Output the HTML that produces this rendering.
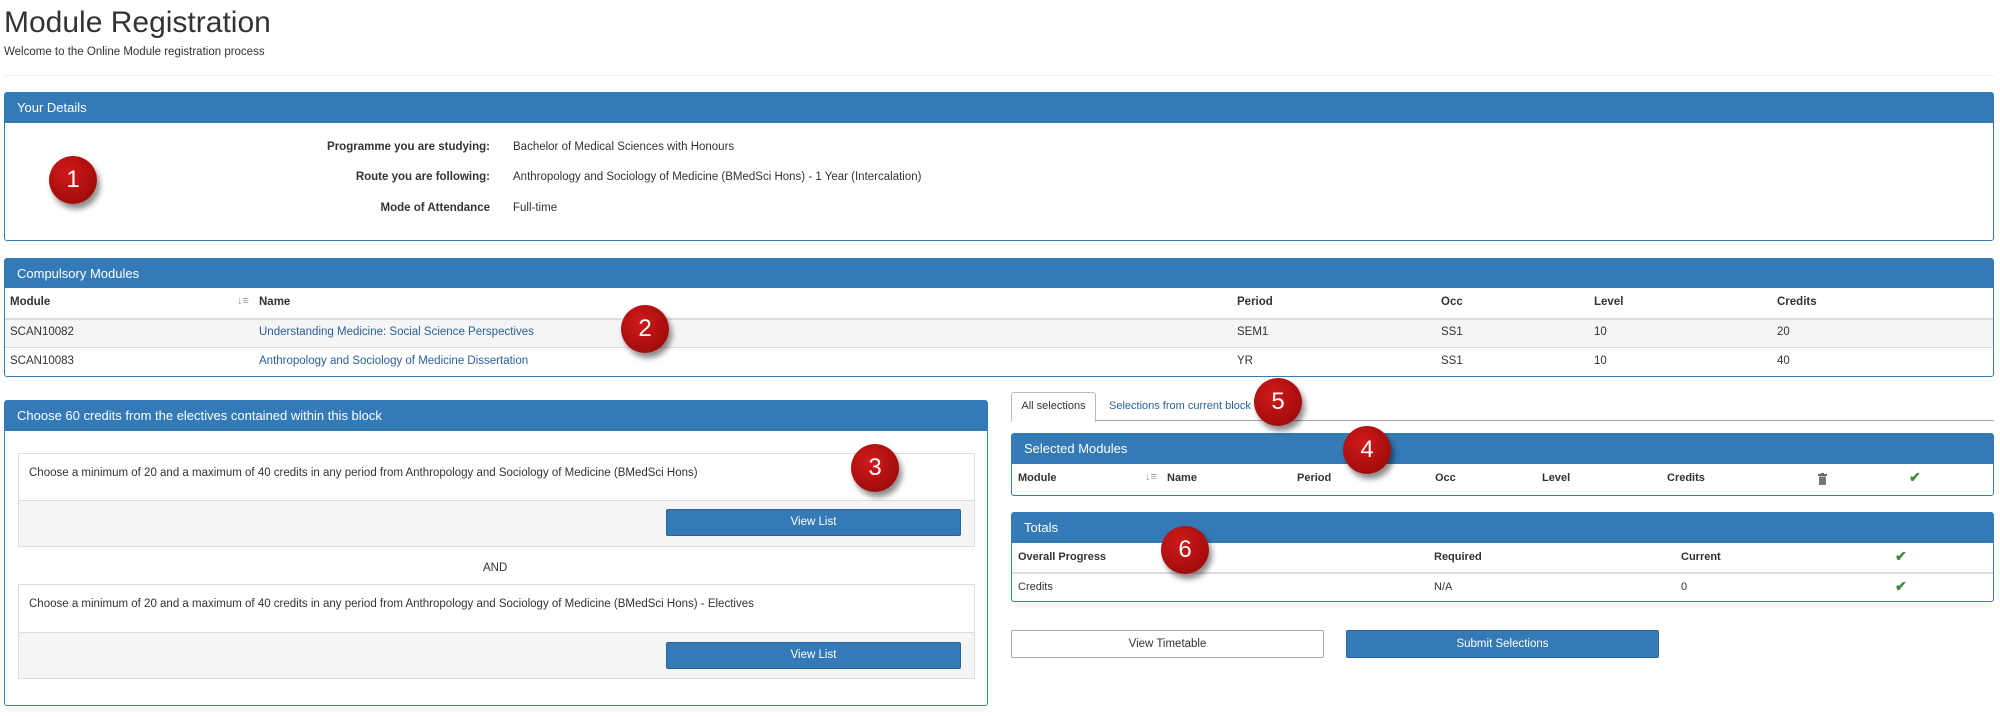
<!DOCTYPE html>
<html><head><meta charset="utf-8">
<style>
*{box-sizing:border-box;margin:0;padding:0}
body{width:2000px;height:717px;background:#fff;font-family:"Liberation Sans",Arial,sans-serif;color:#333;position:relative;overflow:hidden;font-size:11.5px}
.a{position:absolute;white-space:nowrap}
.panel{position:absolute;border:1px solid #337ab7;border-radius:3px;background:#fff;overflow:hidden}
.hd{position:absolute;left:0;right:0;top:0;background:#337ab7;color:#fff;font-size:13px;padding-left:12px}
.b{font-weight:bold}
.row{position:absolute;left:0;right:0;border-top:1px solid #ddd}
.btn{position:absolute;background:#337ab7;border:1px solid #2a6496;color:#fff;text-align:center;border-radius:2px;font-size:11.5px}
.circ{position:absolute;width:48px;height:48px;border-radius:50%;background:radial-gradient(circle at 40% 35%,#d11a1a,#a30c0c 70%);color:#fff;font-size:24px;text-align:center;line-height:48px;box-shadow:3px 5px 6px rgba(0,0,0,.45)}
.lnk{color:#2a5f9e}
.chk{color:#3c8a3c;font-size:14px;font-weight:bold}
</style></head><body>
<div class="a" style="left:4px;top:6px;font-size:30px;color:#333">Module Registration</div>
<div class="a" style="left:4px;top:46px;font-size:11.5px">Welcome to the Online Module registration process</div>
<div class="a" style="left:4px;top:75px;width:1990px;height:1px;background:#eee"></div>

<!-- Your details -->
<div class="panel" style="left:4px;top:92px;width:1990px;height:149px">
 <div class="hd" style="height:30px;line-height:30px">Your Details</div>
</div>
<div class="a b" style="right:1510px;top:141px">Programme you are studying:</div>
<div class="a" style="left:513px;top:141px">Bachelor of Medical Sciences with Honours</div>
<div class="a b" style="right:1510px;top:171px">Route you are following:</div>
<div class="a" style="left:513px;top:171px">Anthropology and Sociology of Medicine (BMedSci Hons) - 1 Year (Intercalation)</div>
<div class="a b" style="right:1510px;top:202px">Mode of Attendance</div>
<div class="a" style="left:513px;top:202px">Full-time</div>

<!-- Compulsory -->
<div class="panel" style="left:4px;top:258px;width:1990px;height:119px">
 <div class="hd" style="height:29px;line-height:29px">Compulsory Modules</div>
 <div class="row" style="top:59px;height:30px;background:#f5f5f5;border-top:2px solid #ddd"></div>
 <div class="row" style="top:88px;height:30px"></div>
</div>
<div class="a b" style="left:10px;top:296px">Module</div>
<div class="a" style="left:237px;top:295px;color:#999;font-size:11px">↓≡</div>
<div class="a b" style="left:259px;top:296px">Name</div>
<div class="a b" style="left:1237px;top:296px">Period</div>
<div class="a b" style="left:1441px;top:296px">Occ</div>
<div class="a b" style="left:1594px;top:296px">Level</div>
<div class="a b" style="left:1777px;top:296px">Credits</div>
<div class="a" style="left:10px;top:326px">SCAN10082</div>
<div class="a lnk" style="left:259px;top:326px">Understanding Medicine: Social Science Perspectives</div>
<div class="a" style="left:1237px;top:326px">SEM1</div><div class="a" style="left:1441px;top:326px">SS1</div><div class="a" style="left:1594px;top:326px">10</div><div class="a" style="left:1777px;top:326px">20</div>
<div class="a" style="left:10px;top:355px">SCAN10083</div>
<div class="a lnk" style="left:259px;top:355px">Anthropology and Sociology of Medicine Dissertation</div>
<div class="a" style="left:1237px;top:355px">YR</div><div class="a" style="left:1441px;top:355px">SS1</div><div class="a" style="left:1594px;top:355px">10</div><div class="a" style="left:1777px;top:355px">40</div>

<!-- Left block -->
<div class="panel" style="left:4px;top:400px;width:984px;height:306px">
 <div class="hd" style="height:30px;line-height:30px">Choose 60 credits from the electives contained within this block</div>
</div>
<div class="a" style="left:18px;top:453px;width:957px;height:94px;border:1px solid #ddd;background:#f5f5f5">
 <div style="position:absolute;left:0;right:0;top:0;height:47px;background:#fff;border-bottom:1px solid #ddd"></div>
</div>
<div class="a" style="left:29px;top:467px">Choose a minimum of 20 and a maximum of 40 credits in any period from Anthropology and Sociology of Medicine (BMedSci Hons)</div>
<div class="btn" style="left:666px;top:509px;width:295px;height:27px;line-height:25px">View List</div>
<div class="a" style="left:483px;top:562px">AND</div>
<div class="a" style="left:18px;top:584px;width:957px;height:95px;border:1px solid #ddd;background:#f5f5f5">
 <div style="position:absolute;left:0;right:0;top:0;height:48px;background:#fff;border-bottom:1px solid #ddd"></div>
</div>
<div class="a" style="left:29px;top:598px">Choose a minimum of 20 and a maximum of 40 credits in any period from Anthropology and Sociology of Medicine (BMedSci Hons) - Electives</div>
<div class="btn" style="left:666px;top:642px;width:295px;height:27px;line-height:25px">View List</div>

<!-- Tabs -->
<div class="a" style="left:1011px;top:420px;width:983px;height:1px;background:#aaa"></div>
<div class="a" style="left:1011px;top:392px;width:85px;height:30px;border:1px solid #bbb;border-bottom:none;background:#fff;border-radius:3px 3px 0 0;text-align:center;line-height:26px;font-size:11px">All selections</div>
<div class="a" style="left:1109px;top:400px;color:#2a5f9e;font-size:11px">Selections from current block</div>

<!-- Selected Modules -->
<div class="panel" style="left:1011px;top:433px;width:983px;height:63px">
 <div class="hd" style="height:30px;line-height:30px">Selected Modules</div>
</div>
<div class="a b" style="left:1018px;top:472px;font-size:11px">Module</div>
<div class="a" style="left:1145px;top:471px;color:#999;font-size:11px">↓≡</div>
<div class="a b" style="left:1167px;top:472px;font-size:11px">Name</div>
<div class="a b" style="left:1297px;top:472px;font-size:11px">Period</div>
<div class="a b" style="left:1435px;top:472px;font-size:11px">Occ</div>
<div class="a b" style="left:1542px;top:472px;font-size:11px">Level</div>
<div class="a b" style="left:1667px;top:472px;font-size:11px">Credits</div>
<svg class="a" style="left:1818px;top:473px" width="9" height="12" viewBox="0 0 9 12"><rect x="0" y="1" width="9" height="2" fill="#666"/><rect x="3" y="0" width="3" height="1.5" fill="#666"/><rect x="1" y="3.5" width="7" height="8.5" fill="#777"/></svg>
<div class="a chk" style="left:1909px;top:469px">✔</div>

<!-- Totals -->
<div class="panel" style="left:1011px;top:512px;width:983px;height:90px">
 <div class="hd" style="height:30px;line-height:30px">Totals</div>
 <div class="row" style="top:59px;border-top:2px solid #ddd"></div>
</div>
<div class="a b" style="left:1018px;top:551px;font-size:11px">Overall Progress</div>
<div class="a b" style="left:1434px;top:551px;font-size:11px">Required</div>
<div class="a b" style="left:1681px;top:551px;font-size:11px">Current</div>
<div class="a chk" style="left:1895px;top:548px">✔</div>
<div class="a" style="left:1018px;top:581px;font-size:11px">Credits</div>
<div class="a" style="left:1434px;top:581px;font-size:11px">N/A</div>
<div class="a" style="left:1681px;top:581px;font-size:11px">0</div>
<div class="a chk" style="left:1895px;top:578px">✔</div>

<div class="a" style="left:1011px;top:630px;width:313px;height:28px;border:1px solid #aaa;text-align:center;line-height:26px;border-radius:2px">View Timetable</div>
<div class="btn" style="left:1346px;top:630px;width:313px;height:28px;line-height:26px">Submit Selections</div>

<div class="circ" style="left:49px;top:156px">1</div>
<div class="circ" style="left:621px;top:305px">2</div>
<div class="circ" style="left:851px;top:444px">3</div>
<div class="circ" style="left:1343px;top:426px">4</div>
<div class="circ" style="left:1254px;top:378px">5</div>
<div class="circ" style="left:1161px;top:526px">6</div>
</body></html>
